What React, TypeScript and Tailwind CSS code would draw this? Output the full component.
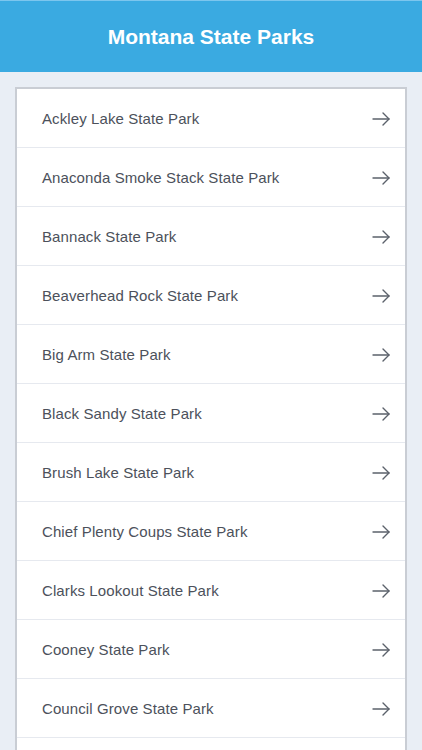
const parks = [
  'Ackley Lake State Park',
  'Anaconda Smoke Stack State Park',
  'Bannack State Park',
  'Beaverhead Rock State Park',
  'Big Arm State Park',
  'Black Sandy State Park',
  'Brush Lake State Park',
  'Chief Plenty Coups State Park',
  'Clarks Lookout State Park',
  'Cooney State Park',
  'Council Grove State Park',
];

function ArrowIcon() {
  return (
    <svg width="18" height="14" viewBox="0 0 18 14" fill="none" stroke="#5b616b" strokeWidth="1.4" strokeLinecap="round" strokeLinejoin="round">
      <path d="M1 7h16" />
      <path d="M11 1l6 6-6 6" />
    </svg>
  );
}

function App() {
  return (
    <div className="h-[750px] overflow-hidden bg-[#e9eef5] font-['Liberation_Sans',Arial,sans-serif]">
      <header className="flex h-[72px] items-center justify-center border-t border-[#7cc6ee] bg-[#3aaae1]">
        <h1 className="text-[21px] font-bold text-white">Montana State Parks</h1>
      </header>

      <section className="mx-[15px] mt-[15px] border-2 border-b-0 border-[#c9cdd4] bg-white" aria-label="State parks">
        {parks.map((park) => (
          <button
            className="flex h-[59px] w-full items-center justify-between border-b border-[#e6e9ef] pt-[2px] pr-[15px] pl-[25px] text-left"
            key={park}
            type="button"
          >
            <span className="text-[15px] tracking-[0.1px] text-[#4c515b]">{park}</span>
            <ArrowIcon />
          </button>
        ))}
        <div className="h-[59px]" />
      </section>
    </div>
  );
}

export default App;
